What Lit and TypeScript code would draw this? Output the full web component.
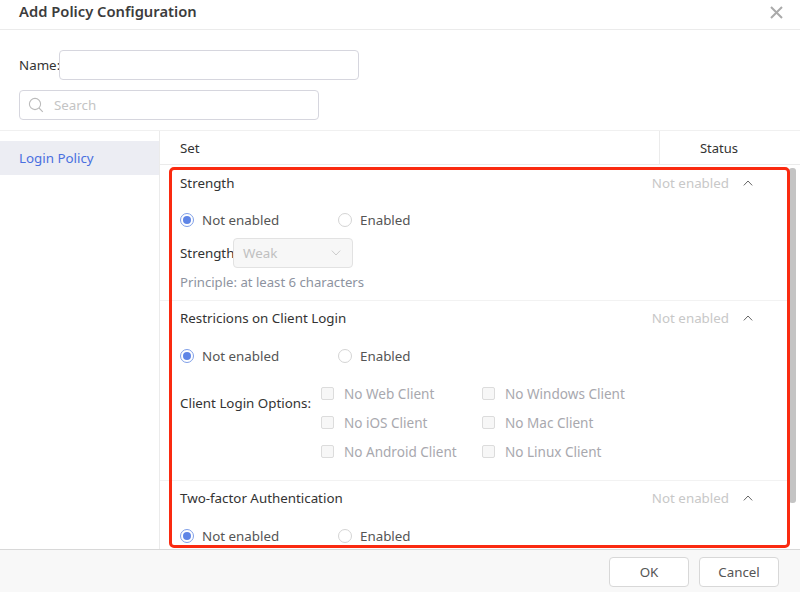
import { LitElement, html, css } from "lit";
import { customElement } from "lit/decorators.js";

const chevUp = html`<svg width="10" height="6" viewBox="0 0 10 6" fill="none" stroke="#666" stroke-width="1"><path d="M.8 5.4 5 1l4.2 4.4"/></svg>`;

@customElement("app-root")
export class AppRoot extends LitElement {
  static styles = css`
    :host { display: flex; flex-direction: column; position: relative; width: 800px; height: 592px; overflow: hidden; background: #fff;
      font-family: "Noto Sans", "Open Sans", sans-serif; font-size: 13.35px; color: #333; }
    * { box-sizing: border-box; }
    .head { height: 30px; flex: none; border-bottom: 1px solid #ebebeb; display: flex; justify-content: space-between; align-items: center; padding: 0 17px 7px 19px; }
    .head svg { position: relative; top: 1px; }
    .title { font-size: 14.75px; font-weight: 600; color: #3c3c3c; }
    .form { height: 101px; flex: none; padding: 20px 0 0 19px; border-bottom: 1px solid #f0f0f0; display: flex; flex-direction: column; gap: 10px; }
    .name { display: flex; align-items: center; }
    .name span { width: 40px; white-space: nowrap; }
    .input { height: 30px; border: 1px solid #d6d6de; border-radius: 4px; background: #fff; }
    .input.n { width: 300px; }
    .input.s { width: 300px; display: flex; align-items: center; gap: 10px; padding-left: 8px; color: #c4c4c4; }
    .main { flex: 1; display: flex; min-height: 0; }
    .side { width: 160px; flex: none; border-right: 1px solid #ebebeb; padding-top: 10px; }
    .item { height: 34px; background: #ecedf3; color: #4a70e0; padding-left: 19px; display: flex; align-items: center; }
    .content { flex: 1; display: flex; flex-direction: column; min-width: 0; }
    .thead { height: 34px; flex: none; display: flex; border-bottom: 1px solid #ebebeb; }
    .thead .set { flex: 1; padding-left: 20px; display: flex; align-items: center; }
    .thead .st { width: 141px; border-left: 1px solid #ebebeb; display: flex; align-items: center; justify-content: center; padding-right: 22px; font-size: 13px; }
    .scroll { flex: 1; min-height: 0; overflow: hidden; position: relative; padding: 1px 11px 0 0; }
    .sec { padding: 0 0 0 20px; border-bottom: 1px solid #f2f2f2; }
    .sec.last { border-bottom: 0; }
    .sec-h { height: 34px; display: flex; justify-content: space-between; align-items: center; padding-right: 36px; }
    .st-r { display: flex; align-items: center; gap: 14px; color: #c8c8c8; }
    .gap { height: 11px; }
    .gap.first { height: 10px; }
    .radios { display: flex; align-items: center; height: 20px; }
    .radio { display: flex; align-items: center; gap: 8px; width: 158px; color: #555; white-space: nowrap; }
    .dot { width: 14px; height: 14px; border-radius: 50%; border: 1px solid #d4d4d4; background: #fff; display: flex; align-items: center; justify-content: center; flex: none; }
    .dot.on { border-color: #7f9fe8; }
    .dot.on::after { content: ""; width: 8px; height: 8px; border-radius: 50%; background: #5f85e6; }
    .sel-row { display: flex; align-items: center; margin-top: 8px; }
    .sel-row > span { width: 53px; white-space: nowrap; }
    .sel { width: 120px; height: 30px; border: 1px solid #e2e2e2; border-radius: 4px; background: #f7f7f7; color: #c0c0c0; display: flex; align-items: center; justify-content: space-between; padding: 0 11px 0 9px; }
    .hint { color: #8d93a0; margin: 5px 0 9px; height: 18px; line-height: 18px; font-size: 13.15px; }
    .opts { display: flex; align-items: flex-start; margin-top: 13px; padding-bottom: 14px; }
    .opts .lab { width: 141px; padding-top: 15px; color: #333; line-height: 18px; white-space: nowrap; }
    .grid { display: grid; grid-template-columns: 161px 161px; grid-auto-rows: 29px; }
    .ck { display: flex; align-items: center; gap: 10px; color: #a8a8ae; height: 29px; white-space: nowrap; font-size: 13.55px; }
    .box { width: 13px; height: 13px; border: 1px solid #dcdcdc; border-radius: 2px; background: #f7f7f7; flex: none; }
    .bar { position: absolute; left: 789px; top: 168px; width: 7px; height: 335px; background: #c4c4c4; border-radius: 3px; }
    .foot { height: 43px; flex: none; border-top: 1px solid #d8d8d8; background: #f8f8f8; display: flex; justify-content: flex-end; gap: 10px; padding: 7px 21px 0 0; }
    .btn { width: 80px; height: 30px; border: 1px solid #d8d8d8; border-radius: 4px; background: #fff; color: #555; display: flex; align-items: center; justify-content: center; }
    .mark { position: absolute; left: 169px; top: 167px; width: 621px; height: 381px; border: 3px solid #fa2a10; border-radius: 5px; pointer-events: none; }
  `;

  private radios() {
    return html`<div class="radios">
      <div class="radio"><span class="dot on"></span>Not enabled</div>
      <div class="radio"><span class="dot"></span>Enabled</div>
    </div>`;
  }

  private header(t: string) {
    return html`<div class="sec-h"><span>${t}</span><span class="st-r">Not enabled ${chevUp}</span></div>`;
  }

  render() {
    const opts = ["No Web Client", "No Windows Client", "No iOS Client", "No Mac Client", "No Android Client", "No Linux Client"];
    return html`
      <div class="head">
        <span class="title">Add Policy Configuration</span>
        <svg width="13" height="13" viewBox="0 0 13 13" stroke="#aaa" stroke-width="2" fill="none"><path d="M1 1l11 11M12 1 1 12"/></svg>
      </div>
      <div class="form">
        <div class="name"><span>Name:</span><div class="input n"></div></div>
        <div class="input s">
          <svg width="16" height="16" viewBox="0 0 16 16" fill="none" stroke="#bbb" stroke-width="1.1"><circle cx="7" cy="7" r="5.6"/><path d="m11 11 3.8 3.8"/></svg>
          <span>Search</span>
        </div>
      </div>
      <div class="main">
        <div class="side"><div class="item">Login Policy</div></div>
        <div class="content">
          <div class="thead"><div class="set">Set</div><div class="st">Status</div></div>
          <div class="scroll">
            <div class="sec">
              ${this.header("Strength")}
              <div class="gap first"></div>
              ${this.radios()}
              <div class="sel-row"><span>Strength</span><div class="sel"><span>Weak</span>
                <svg width="10" height="6" viewBox="0 0 10 6" fill="none" stroke="#ccc"><path d="M.8.6 5 5 9.2.6"/></svg></div></div>
              <div class="hint">Principle: at least 6 characters</div>
            </div>
            <div class="sec">
              ${this.header("Restricions on Client Login")}
              <div class="gap"></div>
              ${this.radios()}
              <div class="opts">
                <div class="lab">Client Login Options:</div>
                <div class="grid">${opts.map(o => html`<div class="ck"><span class="box"></span>${o}</div>`)}</div>
              </div>
            </div>
            <div class="sec last">
              ${this.header("Two-factor Authentication")}
              <div class="gap"></div>
              ${this.radios()}
            </div>
          </div>
        </div>
      </div>
      <div class="foot"><div class="btn">OK</div><div class="btn">Cancel</div></div>
      <div class="bar"></div>
      <div class="mark"></div>
    `;
  }
}
